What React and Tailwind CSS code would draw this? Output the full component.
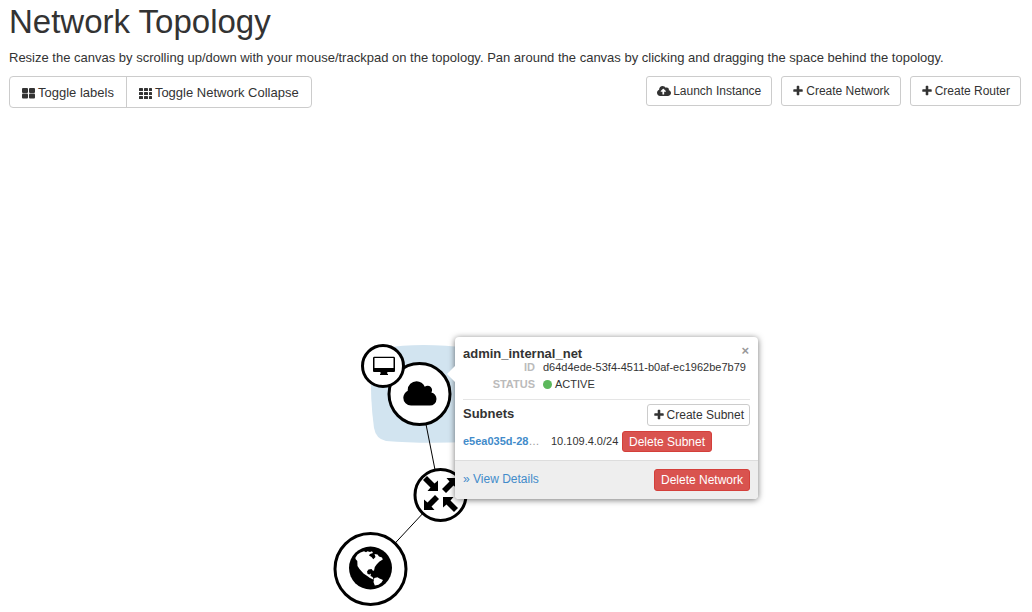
import React from "react";
import { FaCloudUploadAlt } from "react-icons/fa";

function Plus() {
  return (
    <svg viewBox="0 0 1792 1792" className="size-3 shrink-0" fill="currentColor" aria-hidden="true">
      <path d="M1600 736v192q0 40-28 68t-68 28h-416v416q0 40-28 68t-68 28h-192q-40 0-68-28t-28-68v-416h-416q-40 0-68-28t-28-68v-192q0-40 28-68t68-28h416v-416q0-40 28-68t68-28h192q40 0 68 28t28 68v416h416q40 0 68 28t28 68z" />
    </svg>
  );
}

function Grid({ columns }) {
  const large = columns === 2;
  const xs = large ? [0, 7] : [0, 5, 10];
  const ys = large ? [0, 5.5] : [0, 4, 8];
  return (
    <svg viewBox="0 0 13 11" className="h-[11px] w-[13px] shrink-0" fill="currentColor" aria-hidden="true">
      {ys.flatMap((y) =>
        xs.map((x) => (
          <rect key={`${x}-${y}`} x={x} y={y} width={large ? 6 : x === 10 ? 3 : 4} height={large ? 5 : 3} rx={large ? 1 : 0.6} />
        ))
      )}
    </svg>
  );
}

function ActionButton({ icon, children }) {
  return (
    <button type="button" className="flex h-[30px] items-center gap-0.5 rounded-[3px] border border-[#ccc] bg-white px-2.5 text-xs">
      {icon}
      {children}
    </button>
  );
}

const inward = "M-2.500 -3L-13 -3L-10 -6.500L-17.500 -14L-13.500 -18L-6 -10.500L-2.500 -13.500Z";
const outward = "M-16.500 16L-16.500 5.500L-13 8.500L-5.500 1L-1.500 5L-9 12.500L-6 16Z";

function Topology() {
  return (
    <svg width="140" height="270" viewBox="330 340 140 270" className="absolute top-[228px] left-[330px]" role="img" aria-label="Network graph">
      <path d="M384 348Q420 342 470 348V442Q420 444 386 441Q376 439 374 428Q370 400 371 362Q372 350 384 348Z" fill="#d2e4f0" />
      <path d="M420 394L440 495L371 569" fill="none" stroke="#000" />
      <g fill="#fff" stroke="#000" strokeWidth="3">
        <circle cx="419.500" cy="394" r="30.500" />
        <circle cx="383" cy="366" r="20.500" />
        <circle cx="440.500" cy="495" r="25.500" />
        <circle cx="370.500" cy="569" r="35.500" />
      </g>
      <svg x="403" y="379" width="36" height="31" viewBox="0 0 2048 1792">
        <path d="M1920 1152q0 159-112.5 271.5t-271.5 112.5h-1088q-185 0-316.5-131.5t-131.5-316.5q0-132 71-241.5t187-163.5q-2-28-2-43 0-212 150-362t362-150q158 0 286.500 88t187.500 230q70-62 166-62 106 0 181 75t75 181q0 75-41 138 129 30 213 134.500t84 239.500z" />
      </svg>
      <path fillRule="evenodd" d="M374 356.800H394Q395 357 395 358V371Q395 372 394 372H387.300V374H388V375H380V374H380.500V372H374Q373 372 373 371V358Q373 357 374 356.800ZM374.500 358V368H393.500V358Z" />
      <g transform="translate(440.500 494)">
        <path d={inward} />
        <path d={outward} />
        <path d={inward} transform="rotate(180)" />
        <path d={outward} transform="rotate(180)" />
      </g>
      <circle cx="370.500" cy="568" r="21.500" />
      <path fill="#fff" d="M355.500 557.500L357.500 554.500L360.500 552.500L364 551.300L366 552.200L367.500 551.300L370 552L372 551.200L373 553L370 554L369 555.600L371.500 557L373.300 559.200L375.500 557L374.500 554L377.500 554.500L379 556.500L382 557.500L382.800 559.500L379.500 561.500L377 564L374.800 567L374 570.800L372.600 570.500L371.600 569L368.500 569.500L367 571.500L367.600 574L369.500 574.500L371 573.500L370.500 576L372.500 577L373.800 579.800L370 578L366.500 575.500L363.500 573.500L359.500 569L357.500 566L357.300 561L355.500 559Z" />
      <path fill="#fff" d="M374.300 578L377.500 577.200L379.500 578.500L383 580L381.500 582.500L378.500 584.800L374.800 585.600L373.500 582Z" />
    </svg>
  );
}

function NetworkPopover() {
  return (
    <section className="absolute top-[225px] left-[455px] w-[303px] rounded-[4px] bg-white shadow-[0_1px_6px_rgba(0,0,0,0.55)]">
      <svg viewBox="0 0 8 16" className="absolute top-[29px] -left-[8px] h-4 w-2" aria-hidden="true">
        <path d="M8 0L0 8L8 16Z" fill="#fff" />
      </svg>
      <div className="px-2 pt-1.5 pb-2">
        <div className="flex h-4 items-center justify-between">
          <h2 className="pt-1.5 text-[13px] leading-4 font-bold">admin_internal_net</h2>
          <button type="button" aria-label="Close" className="pr-px text-[13px] leading-4 font-bold text-[#999]">×</button>
        </div>
        <dl className="grid grid-cols-[72px_1fr] gap-x-2 border-b border-[#e5e5e5] pb-1.5 text-[11px] leading-[17px]">
          <dt className="text-right font-bold text-[#bbb]">ID</dt>
          <dd className="whitespace-nowrap">d64d4ede-53f4-4511-b0af-ec1962be7b79</dd>
          <dt className="text-right font-bold text-[#bbb]">STATUS</dt>
          <dd className="flex items-center gap-[3px]">
            <span className="size-[9px] rounded-full bg-[#5cb85c]" />ACTIVE
          </dd>
        </dl>
        <div className="flex items-start justify-between pt-1">
          <h3 className="pt-0.5 text-[13px] leading-4 font-bold">Subnets</h3>
          <button type="button" className="flex h-[22px] items-center gap-0.5 rounded-[3px] border border-[#ccc] bg-white px-[5px] text-xs">
            <Plus />Create Subnet
          </button>
        </div>
        <div className="flex items-center pt-[5px] text-[11px]">
          <a href="#subnet" className="w-[88px] font-bold text-[#428bca]">e5ea035d-28<span className="font-normal text-[#999]">…</span></a>
          <span className="w-[71px]">10.109.4.0/24</span>
          <button type="button" className="h-[21px] rounded-[3px] border border-[#d43f3a] bg-[#d9534f] px-1.5 text-xs text-white">Delete Subnet</button>
        </div>
      </div>
      <div className="flex items-start justify-between rounded-b-[4px] border-t border-[#ddd] bg-[#eee] p-2">
        <a href="#details" className="text-xs leading-5 text-[#428bca]">» View Details</a>
        <button type="button" className="h-[22px] rounded-[3px] border border-[#d43f3a] bg-[#d9534f] px-1.5 text-xs text-white">Delete Network</button>
      </div>
    </section>
  );
}

export default function App() {
  return (
    <main className="min-h-screen overflow-hidden bg-white font-['Liberation_Sans',Arial,sans-serif] text-[#333]">
      <header className="pr-[11px] pl-[9px]">
        <h1 className="pt-0.5 text-[33px] leading-10">Network Topology</h1>
        <p className="pt-2 text-[13px] leading-4">Resize the canvas by scrolling up/down with your mouse/trackpad on the topology. Pan around the canvas by clicking and dragging the space behind the topology.</p>
        <div className="flex items-start justify-between pt-2.5">
          <div className="flex h-8 rounded-[4px] border border-[#ccc] text-[13px]">
            <button type="button" className="flex items-center gap-[3px] border-r border-[#ccc] px-3 pt-0.5">
              <Grid columns={2} />Toggle labels
            </button>
            <button type="button" className="flex items-center gap-[3px] px-3 pt-0.5">
              <Grid columns={3} />Toggle Network Collapse
            </button>
          </div>
          <div className="flex gap-[9px]">
            <ActionButton icon={<FaCloudUploadAlt className="size-[14px]" />}>Launch Instance</ActionButton>
            <ActionButton icon={<Plus />}>Create Network</ActionButton>
            <ActionButton icon={<Plus />}>Create Router</ActionButton>
          </div>
        </div>
      </header>
      <div className="relative mt-1 h-[500px]">
        <Topology />
        <NetworkPopover />
      </div>
    </main>
  );
}
